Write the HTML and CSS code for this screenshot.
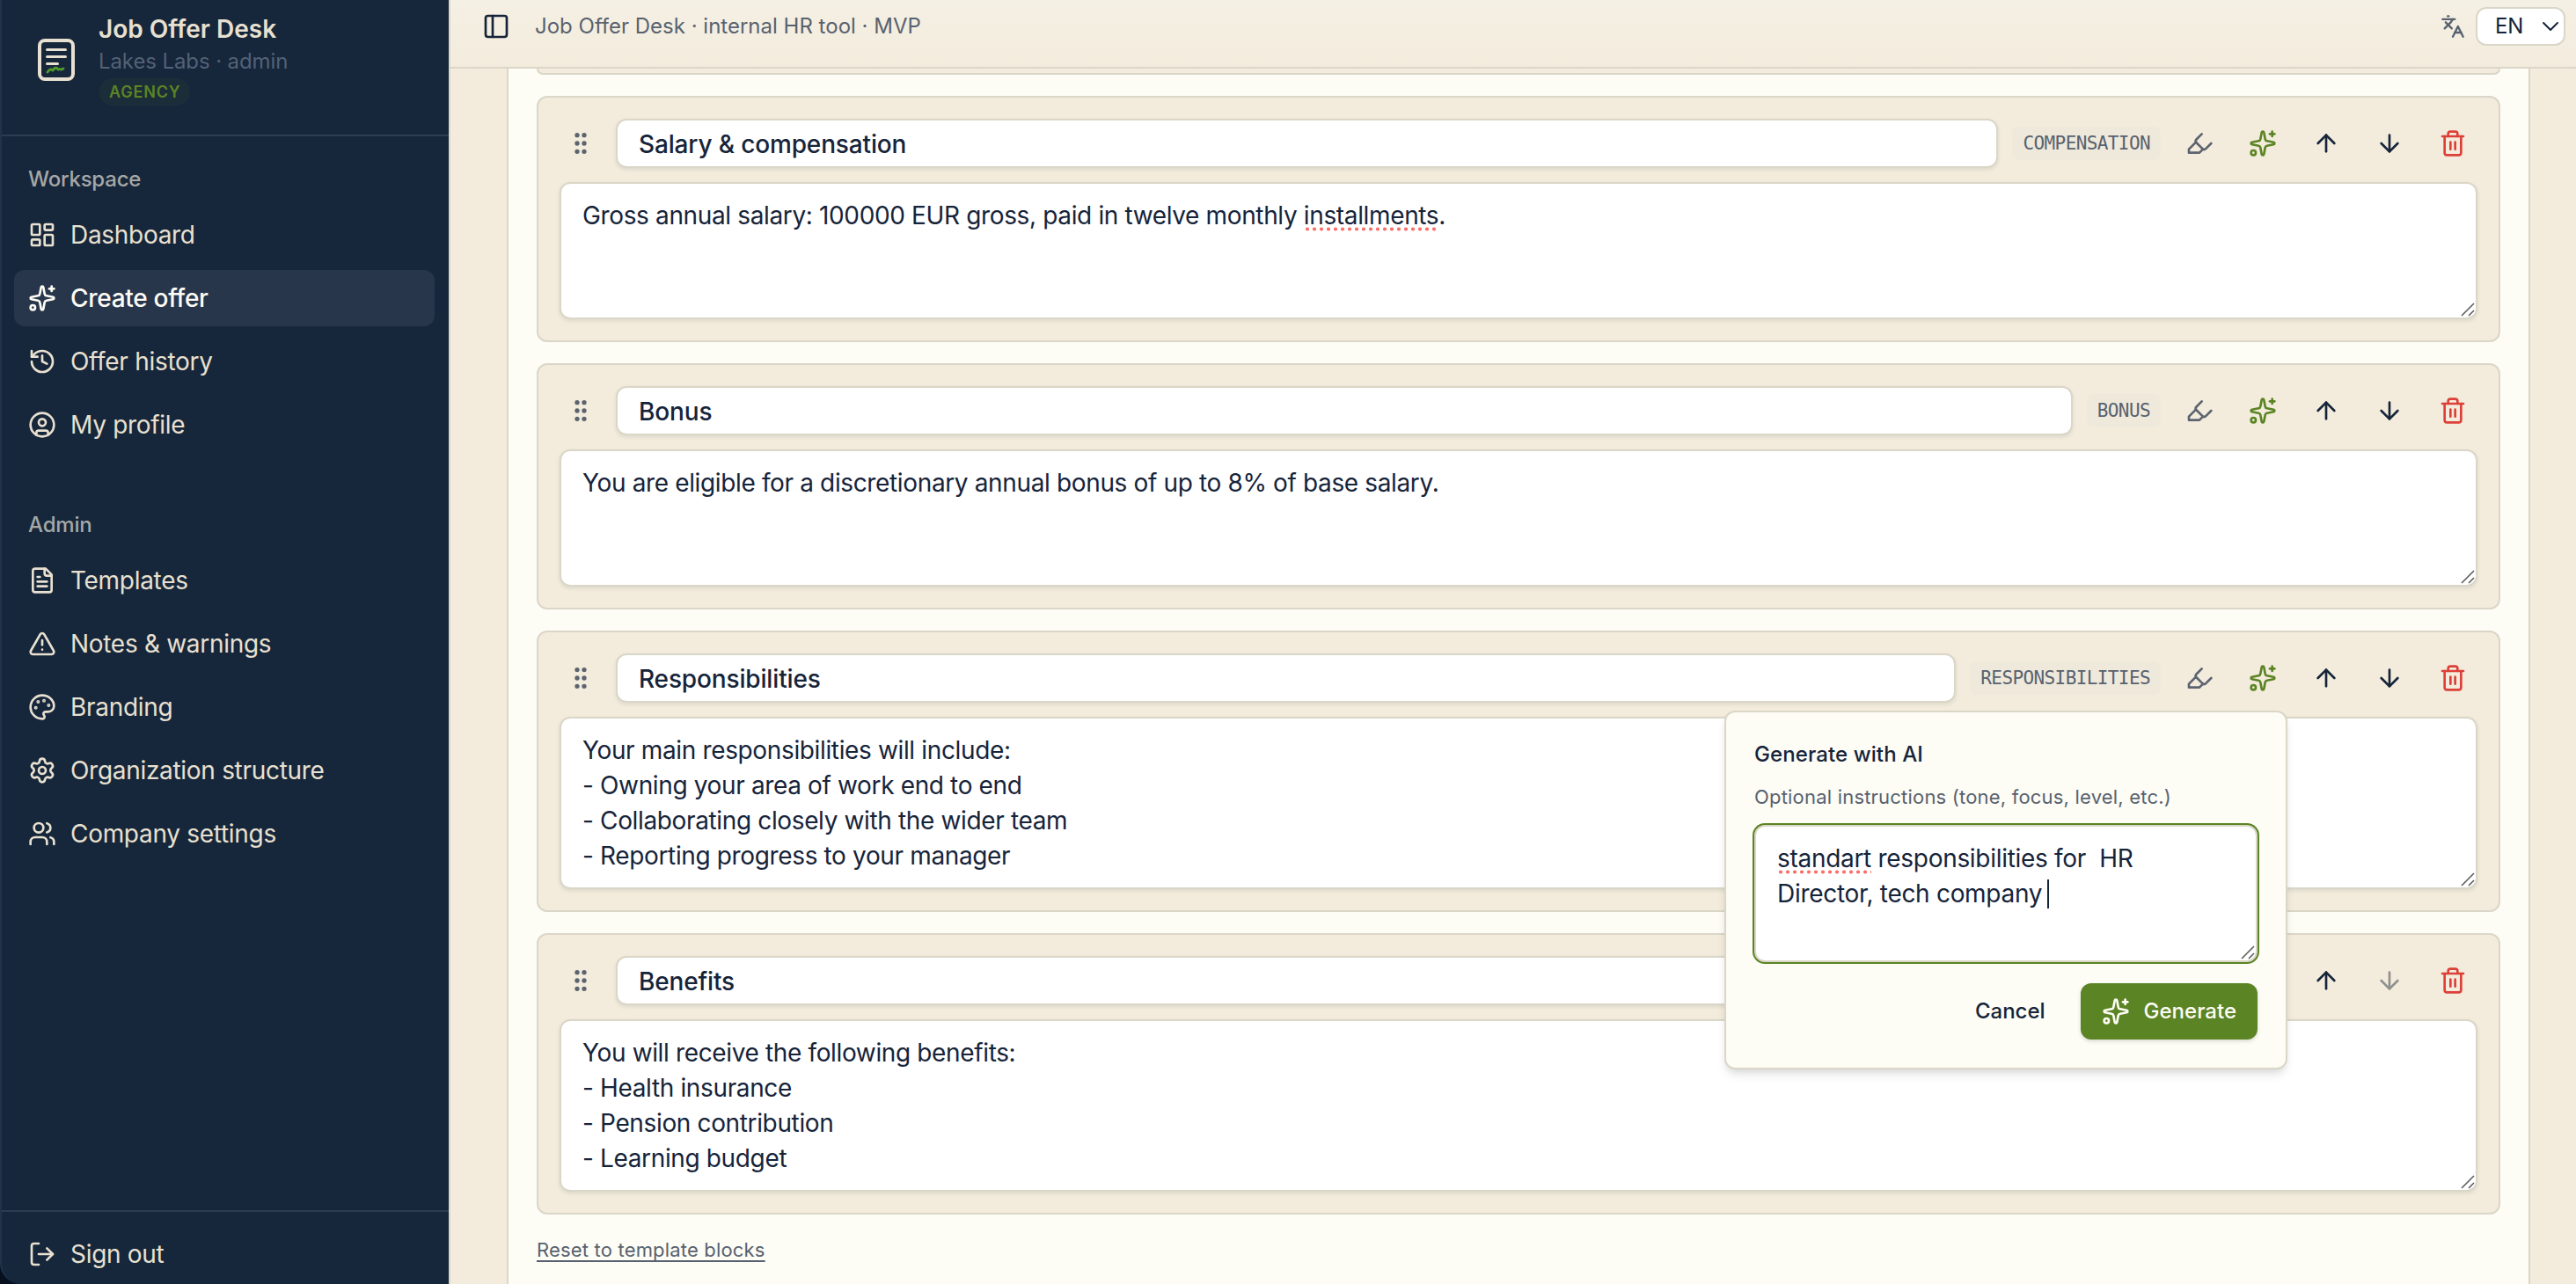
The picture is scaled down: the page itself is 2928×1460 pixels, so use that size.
FILE: index.html
```html
<!DOCTYPE html>
<html lang="en">
<head>
<meta charset="utf-8">
<title>Job Offer Desk</title>
<link rel="stylesheet" href="styles.css">
</head>
<body>

<!-- icons -->
<svg class="sprite">
  <symbol id="dashboard" viewBox="0 0 24 24"><rect width="7" height="9" x="3" y="3" rx="1"/><rect width="7" height="5" x="14" y="3" rx="1"/><rect width="7" height="9" x="14" y="12" rx="1"/><rect width="7" height="5" x="3" y="16" rx="1"/></symbol>
  <symbol id="sparkles" viewBox="0 0 24 24"><path d="M11.017 2.814a1 1 0 0 1 1.966 0l1.051 5.558a2 2 0 0 0 1.594 1.594l5.558 1.051a1 1 0 0 1 0 1.966l-5.558 1.051a2 2 0 0 0-1.594 1.594l-1.051 5.558a1 1 0 0 1-1.966 0l-1.051-5.558a2 2 0 0 0-1.594-1.594l-5.558-1.051a1 1 0 0 1 0-1.966l5.558-1.051a2 2 0 0 0 1.594-1.594z"/><path d="M20 2v4"/><path d="M22 4h-4"/><circle cx="4" cy="20" r="2"/></symbol>
  <symbol id="history" viewBox="0 0 24 24"><path d="M3 12a9 9 0 1 0 9-9 9.75 9.75 0 0 0-6.74 2.74L3 8"/><path d="M3 3v5h5"/><path d="M12 7v5l4 2"/></symbol>
  <symbol id="profile" viewBox="0 0 24 24"><circle cx="12" cy="12" r="10"/><circle cx="12" cy="10" r="3"/><path d="M7 20.662V19a2 2 0 0 1 2-2h6a2 2 0 0 1 2 2v1.662"/></symbol>
  <symbol id="file" viewBox="0 0 24 24"><path d="M15 2H6a2 2 0 0 0-2 2v16a2 2 0 0 0 2 2h12a2 2 0 0 0 2-2V7Z"/><path d="M14 2v4a2 2 0 0 0 2 2h4"/><path d="M10 9H8"/><path d="M16 13H8"/><path d="M16 17H8"/></symbol>
  <symbol id="warning" viewBox="0 0 24 24"><path d="m21.73 18-8-14a2 2 0 0 0-3.48 0l-8 14A2 2 0 0 0 4 21h16a2 2 0 0 0 1.73-3"/><path d="M12 9v4"/><path d="M12 17h.01"/></symbol>
  <symbol id="palette" viewBox="0 0 24 24"><path d="M12 22a1 1 0 0 1 0-20 10 9 0 0 1 10 9 5 5 0 0 1-5 5h-2.25a1.75 1.75 0 0 0-1.4 2.8l.3.4a1.75 1.75 0 0 1-1.4 2.8z"/><circle cx="13.5" cy="6.5" r=".5" fill="currentColor"/><circle cx="17.5" cy="10.5" r=".5" fill="currentColor"/><circle cx="6.5" cy="12.5" r=".5" fill="currentColor"/><circle cx="8.5" cy="7.5" r=".5" fill="currentColor"/></symbol>
  <symbol id="settings" viewBox="0 0 24 24"><path d="M9.671 4.136a2.34 2.34 0 0 1 4.659 0 2.34 2.34 0 0 0 3.319 1.915 2.34 2.34 0 0 1 2.33 4.033 2.34 2.34 0 0 0 0 3.831 2.34 2.34 0 0 1-2.33 4.033 2.34 2.34 0 0 0-3.319 1.915 2.34 2.34 0 0 1-4.659 0 2.34 2.34 0 0 0-3.32-1.915 2.34 2.34 0 0 1-2.33-4.033 2.34 2.34 0 0 0 0-3.831A2.34 2.34 0 0 1 6.35 6.051a2.34 2.34 0 0 0 3.319-1.915"/><circle cx="12" cy="12" r="3"/></symbol>
  <symbol id="users" viewBox="0 0 24 24"><path d="M16 21v-2a4 4 0 0 0-4-4H6a4 4 0 0 0-4 4v2"/><path d="M16 3.128a4 4 0 0 1 0 7.744"/><path d="M22 21v-2a4 4 0 0 0-3-3.87"/><circle cx="9" cy="7" r="4"/></symbol>
  <symbol id="logout" viewBox="0 0 24 24"><path d="m16 17 5-5-5-5"/><path d="M21 12H9"/><path d="M9 21H5a2 2 0 0 1-2-2V5a2 2 0 0 1 2-2h4"/></symbol>
  <symbol id="panel" viewBox="0 0 24 24"><rect width="18" height="18" x="3" y="3" rx="2"/><path d="M9 3v18"/></symbol>
  <symbol id="languages" viewBox="0 0 24 24"><path d="m5 8 6 6"/><path d="m4 14 6-6 2-3"/><path d="M2 5h12"/><path d="M7 2h1"/><path d="m22 22-5-10-5 10"/><path d="M14 18h6"/></symbol>
  <symbol id="chevron" viewBox="0 0 20 12"><path d="m2 2 8 8 8-8"/></symbol>
  <symbol id="grip" viewBox="0 0 24 24"><circle cx="9" cy="12" r="1"/><circle cx="9" cy="5" r="1"/><circle cx="9" cy="19" r="1"/><circle cx="15" cy="12" r="1"/><circle cx="15" cy="5" r="1"/><circle cx="15" cy="19" r="1"/></symbol>
  <symbol id="marker" viewBox="0 0 24 24"><path d="m9 11-6 6v3h9l3-3"/><path d="m22 12-4.6 4.6a2 2 0 0 1-2.8 0l-5.2-5.2a2 2 0 0 1 0-2.8L14 4"/></symbol>
  <symbol id="up" viewBox="0 0 24 24"><path d="m5 12 7-7 7 7"/><path d="M12 19V5"/></symbol>
  <symbol id="down" viewBox="0 0 24 24"><path d="M12 5v14"/><path d="m19 12-7 7-7-7"/></symbol>
  <symbol id="trash" viewBox="0 0 24 24"><path d="M3 6h18"/><path d="M19 6v14a2 2 0 0 1-2 2H7a2 2 0 0 1-2-2V6"/><path d="M8 6V4a2 2 0 0 1 2-2h4a2 2 0 0 1 2 2v2"/><path d="M10 11v6"/><path d="M14 11v6"/></symbol>
  <symbol id="resize" viewBox="0 0 16 16"><path d="M1 15 15 1M9 15l6-6"/></symbol>
</svg>

<div class="app">
  <aside class="sidebar">
    <div class="brand">
      <svg class="logo" viewBox="0 0 64 64">
        <rect x="13" y="10" width="38" height="44" rx="6"/>
        <path d="M21.500 20.500h21M21.500 28.500h21M21.500 36.500h12"/>
        <path class="sign" d="M22 46c2-3 4-4 6-2 2-3 4-4 6-1 2-1 4 1 6-1"/>
      </svg>
      <div class="brand-text">
        <div class="brand-name">Job Offer Desk</div>
        <div class="brand-org">Lakes Labs · admin</div>
        <span class="plan">AGENCY</span>
      </div>
    </div>

    <nav class="nav">
      <div class="nav-label">Workspace</div>
      <a class="nav-item"><svg class="icon"><use href="#dashboard"/></svg>Dashboard</a>
      <a class="nav-item active"><svg class="icon"><use href="#sparkles"/></svg>Create offer</a>
      <a class="nav-item"><svg class="icon"><use href="#history"/></svg>Offer history</a>
      <a class="nav-item"><svg class="icon"><use href="#profile"/></svg>My profile</a>
    </nav>
    <nav class="nav">
      <div class="nav-label">Admin</div>
      <a class="nav-item"><svg class="icon"><use href="#file"/></svg>Templates</a>
      <a class="nav-item"><svg class="icon"><use href="#warning"/></svg>Notes &amp; warnings</a>
      <a class="nav-item"><svg class="icon"><use href="#palette"/></svg>Branding</a>
      <a class="nav-item"><svg class="icon"><use href="#settings"/></svg>Organization structure</a>
      <a class="nav-item"><svg class="icon"><use href="#users"/></svg>Company settings</a>
    </nav>

    <div class="sidebar-footer">
      <a class="nav-item"><svg class="icon"><use href="#logout"/></svg>Sign out</a>
    </div>
  </aside>

  <main class="main">
    <header class="topbar">
      <svg class="icon"><use href="#panel"/></svg>
      <span class="topbar-title">Job Offer Desk · internal HR tool · MVP</span>
      <svg class="icon lang-icon"><use href="#languages"/></svg>
      <div class="lang">EN<svg class="icon"><use href="#chevron"/></svg></div>
    </header>

    <section class="card">
      <div class="block block-cut"></div>

      <div class="block">
        <div class="block-head">
          <span class="grip"><svg class="icon"><use href="#grip"/></svg></span>
          <div class="field title">Salary &amp; compensation</div>
          <span class="tag">COMPENSATION</span>
          <span class="btn muted"><svg class="icon"><use href="#marker"/></svg></span>
          <span class="btn green"><svg class="icon"><use href="#sparkles"/></svg></span>
          <span class="btn"><svg class="icon"><use href="#up"/></svg></span>
          <span class="btn"><svg class="icon"><use href="#down"/></svg></span>
          <span class="btn red"><svg class="icon"><use href="#trash"/></svg></span>
        </div>
        <div class="field area">Gross annual salary: 100000 EUR gross, paid in twelve monthly <span class="typo">installments</span>.<svg class="resize"><use href="#resize"/></svg></div>
      </div>

      <div class="block">
        <div class="block-head">
          <span class="grip"><svg class="icon"><use href="#grip"/></svg></span>
          <div class="field title">Bonus</div>
          <span class="tag">BONUS</span>
          <span class="btn muted"><svg class="icon"><use href="#marker"/></svg></span>
          <span class="btn green"><svg class="icon"><use href="#sparkles"/></svg></span>
          <span class="btn"><svg class="icon"><use href="#up"/></svg></span>
          <span class="btn"><svg class="icon"><use href="#down"/></svg></span>
          <span class="btn red"><svg class="icon"><use href="#trash"/></svg></span>
        </div>
        <div class="field area">You are eligible for a discretionary annual bonus of up to 8% of base salary.<svg class="resize"><use href="#resize"/></svg></div>
      </div>

      <div class="block">
        <div class="block-head">
          <span class="grip"><svg class="icon"><use href="#grip"/></svg></span>
          <div class="field title">Responsibilities</div>
          <span class="tag">RESPONSIBILITIES</span>
          <span class="btn muted"><svg class="icon"><use href="#marker"/></svg></span>
          <span class="btn green"><svg class="icon"><use href="#sparkles"/></svg>
            <div class="popover">
              <div class="popover-title">Generate with AI</div>
              <div class="popover-label">Optional instructions (tone, focus, level, etc.)</div>
              <div class="field area focused"><span class="typo">standart</span> responsibilities for&nbsp; HR<br>Director, tech company <i class="caret"></i><svg class="resize"><use href="#resize"/></svg></div>
              <div class="popover-actions">
                <span class="action">Cancel</span>
                <span class="action primary"><svg class="icon"><use href="#sparkles"/></svg>Generate</span>
              </div>
            </div>
          </span>
          <span class="btn"><svg class="icon"><use href="#up"/></svg></span>
          <span class="btn"><svg class="icon"><use href="#down"/></svg></span>
          <span class="btn red"><svg class="icon"><use href="#trash"/></svg></span>
        </div>
        <div class="field area">Your main responsibilities will include:<br>- Owning your area of work end to end<br>- Collaborating closely with the wider team<br>- Reporting progress to your manager<svg class="resize"><use href="#resize"/></svg></div>
      </div>

      <div class="block">
        <div class="block-head">
          <span class="grip"><svg class="icon"><use href="#grip"/></svg></span>
          <div class="field title">Benefits</div>
          <span class="tag">BENEFITS</span>
          <span class="btn muted"><svg class="icon"><use href="#marker"/></svg></span>
          <span class="btn green"><svg class="icon"><use href="#sparkles"/></svg></span>
          <span class="btn"><svg class="icon"><use href="#up"/></svg></span>
          <span class="btn disabled"><svg class="icon"><use href="#down"/></svg></span>
          <span class="btn red"><svg class="icon"><use href="#trash"/></svg></span>
        </div>
        <div class="field area">You will receive the following benefits:<br>- Health insurance<br>- Pension contribution<br>- Learning budget<svg class="resize"><use href="#resize"/></svg></div>
      </div>

      <a class="reset">Reset to template blocks</a>
    </section>
  </main>
</div>

</body>
</html>
```
FILE: styles.css
```css
* {
  box-sizing: border-box;
}

body {
  margin: 0;
  height: 1460px;
  overflow: hidden;
  background: #06101f;
  color: #16243a;
  font-family: Inter, "Liberation Sans", sans-serif;
  font-size: 28px;
  line-height: 40px;
  letter-spacing: -0.3px;
}

.sprite {
  display: none;
}

.icon {
  width: 32px;
  height: 32px;
  flex-shrink: 0;
  fill: none;
  stroke: currentColor;
  stroke-width: 2;
  stroke-linecap: round;
  stroke-linejoin: round;
}

.app {
  display: flex;
  height: 1460px;
}

/* sidebar */

.sidebar {
  display: flex;
  flex-direction: column;
  width: 512px;
  flex-shrink: 0;
  background: #16263b;
  border-left: 2px solid #22344a;
  border-right: 2px solid #dcd7c8;
  border-bottom-left-radius: 24px;
  color: #e8e0d0;
}

.brand {
  display: flex;
  align-items: center;
  gap: 16px;
  height: 155px;
  padding: 0 30px 18px;
  border-bottom: 2px solid #2d3d51;
}

.logo {
  width: 64px;
  height: 64px;
  flex-shrink: 0;
  fill: none;
  stroke: #e8e0d0;
  stroke-width: 4;
  stroke-linecap: round;
  stroke-linejoin: round;
}

.logo path {
  stroke-width: 3;
}

.logo .sign {
  stroke: #4f9a2a;
}

.brand-text {
  display: flex;
  flex-direction: column;
  align-items: flex-start;
}

.brand-name {
  font-weight: 600;
  line-height: 36px;
  letter-spacing: 0;
}

.brand-org {
  color: #536175;
  font-size: 24px;
  line-height: 38px;
  letter-spacing: -0.1px;
}

.plan {
  padding: 0 11px 0 12px;
  border-radius: 16px;
  background: #1b2d39;
  color: #5b8424;
  font-size: 18px;
  font-weight: 600;
  line-height: 31px;
  letter-spacing: 0.8px;
}

.nav {
  display: flex;
  flex-direction: column;
  gap: 8px;
  padding: 16px 16px 24px 14px;
}

.nav + .nav {
  padding-top: 25px;
}

.nav-label {
  height: 56px;
  padding: 0 16px;
  color: #a5a8a6;
  font-size: 24px;
  font-weight: 500;
  line-height: 65px;
  letter-spacing: -0.2px;
}

.nav-item {
  display: flex;
  align-items: center;
  gap: 16px;
  height: 64px;
  padding: 0 16px;
  border-radius: 12px;
}

.nav-item.active {
  background: #28364c;
  color: #fdfcf5;
  font-weight: 500;
}

.sidebar-footer {
  height: 84px;
  margin-top: auto;
  padding: 16px 16px 0 14px;
  border-top: 2px solid #2d3d51;
}

/* main */

.main {
  flex: 1;
  background: #f3ecdc;
}

.topbar {
  display: flex;
  align-items: center;
  height: 78px;
  padding: 0 12px 17px 36px;
  border-bottom: 2px solid #dad6c8;
  background: linear-gradient(#f5f0e4, #f3ecdd);
}

.topbar-title {
  margin-left: 28px;
  color: #58626f;
  font-size: 24px;
  letter-spacing: 0;
}

.lang-icon {
  width: 28px;
  height: 28px;
  margin-left: auto;
  color: #58626f;
}

.lang {
  display: flex;
  align-items: center;
  justify-content: space-between;
  width: 102px;
  height: 44px;
  margin-left: 12px;
  padding: 0 5px 0 20px;
  border: 2px solid #dad6c8;
  border-radius: 12px;
  background: #fff;
  font-size: 24px;
}

.lang .icon {
  width: 20px;
  height: 12px;
}

.card {
  display: flex;
  flex-direction: column;
  gap: 24px;
  height: 1382px;
  margin: 0 52px 0 64px;
  padding: 0 32px;
  border: solid #dad6c8;
  border-width: 0 2px;
  background: #fdfcf5;
}

.block {
  padding: 24px;
  border: 2px solid #dad6c8;
  border-radius: 12px;
  background: #f3ecdc;
}

.block-cut {
  height: 7px;
  padding: 0;
  border-top: 0;
  border-radius: 0 0 12px 12px;
}

.block-head {
  display: flex;
  align-items: center;
  gap: 16px;
  height: 56px;
  margin-bottom: 16px;
}

.grip {
  display: flex;
  justify-content: center;
  width: 48px;
  color: #5d6470;
}

.field {
  border: 2px solid #dad6c8;
  border-radius: 12px;
  background: #fff;
  box-shadow: 0 2px 4px rgba(22, 36, 58, 0.1);
}

.title {
  flex: 1;
  height: 56px;
  padding: 7px 24px;
  font-weight: 500;
  line-height: 40px;
  letter-spacing: -0.15px;
}

.area {
  position: relative;
  min-height: 156px;
  padding: 16px 24px;
  letter-spacing: -0.36px;
}

/* spellcheck marks */
.typo {
  padding-bottom: 1px;
  background: radial-gradient(circle, #fb6f68 1.7px, transparent 2.3px) 0 100% / 8px 5px repeat-x;
}

.resize {
  position: absolute;
  right: 1px;
  bottom: 1px;
  width: 16px;
  height: 16px;
  fill: none;
  stroke: #5f5f5f;
  stroke-width: 1.6;
}

.tag {
  padding: 0 12px;
  border-radius: 8px;
  background: #efe9db;
  color: #58626f;
  font-family: "DejaVu Sans Mono", monospace;
  font-size: 21px;
  line-height: 38px;
  letter-spacing: -0.6px;
}

.btn {
  position: relative;
  display: flex;
  align-items: center;
  justify-content: center;
  width: 56px;
  height: 56px;
}

.muted {
  color: #5d6470;
}

.green {
  color: #5b8424;
}

.red {
  color: #dc4038;
}

.disabled {
  color: #8f9190;
}

.popover {
  position: absolute;
  top: 65px;
  right: 0;
  z-index: 2;
  width: 640px;
  padding: 32px;
  border: 2px solid #dad6c8;
  border-radius: 12px;
  background: #fdfcf5;
  box-shadow: 0 8px 12px -2px rgba(0, 0, 0, 0.1), 0 4px 8px -4px rgba(0, 0, 0, 0.1);
  color: #16243a;
}

.popover-title {
  margin-bottom: 16px;
  font-size: 24px;
  font-weight: 500;
  line-height: 32px;
  letter-spacing: 0.1px;
}

.popover-label {
  margin-bottom: 16px;
  color: #58626f;
  font-size: 22px;
  line-height: 32px;
  letter-spacing: 0.2px;
}

.focused {
  letter-spacing: -0.3px;
  box-shadow: 0 0 0 2px #5b8424;
}

.caret {
  display: inline-block;
  width: 2px;
  height: 33px;
  margin-left: -2px;
  vertical-align: -7px;
  background: #16243a;
}

.popover-actions {
  display: flex;
  justify-content: flex-end;
  gap: 16px;
  margin-top: 24px;
}

.action {
  display: flex;
  align-items: center;
  gap: 16px;
  height: 64px;
  padding: 0 24px;
  border-radius: 12px;
  font-size: 24px;
  font-weight: 500;
  letter-spacing: 0;
}

.primary {
  background: #5b8424;
  box-shadow: 0 2px 4px rgba(0, 0, 0, 0.15);
  color: #fdfcf5;
}

.reset {
  align-self: flex-start;
  margin-top: -4px;
  color: #58626f;
  font-size: 22px;
  letter-spacing: 0.18px;
  text-decoration: underline 2px;
  text-underline-offset: 4px;
}
```
